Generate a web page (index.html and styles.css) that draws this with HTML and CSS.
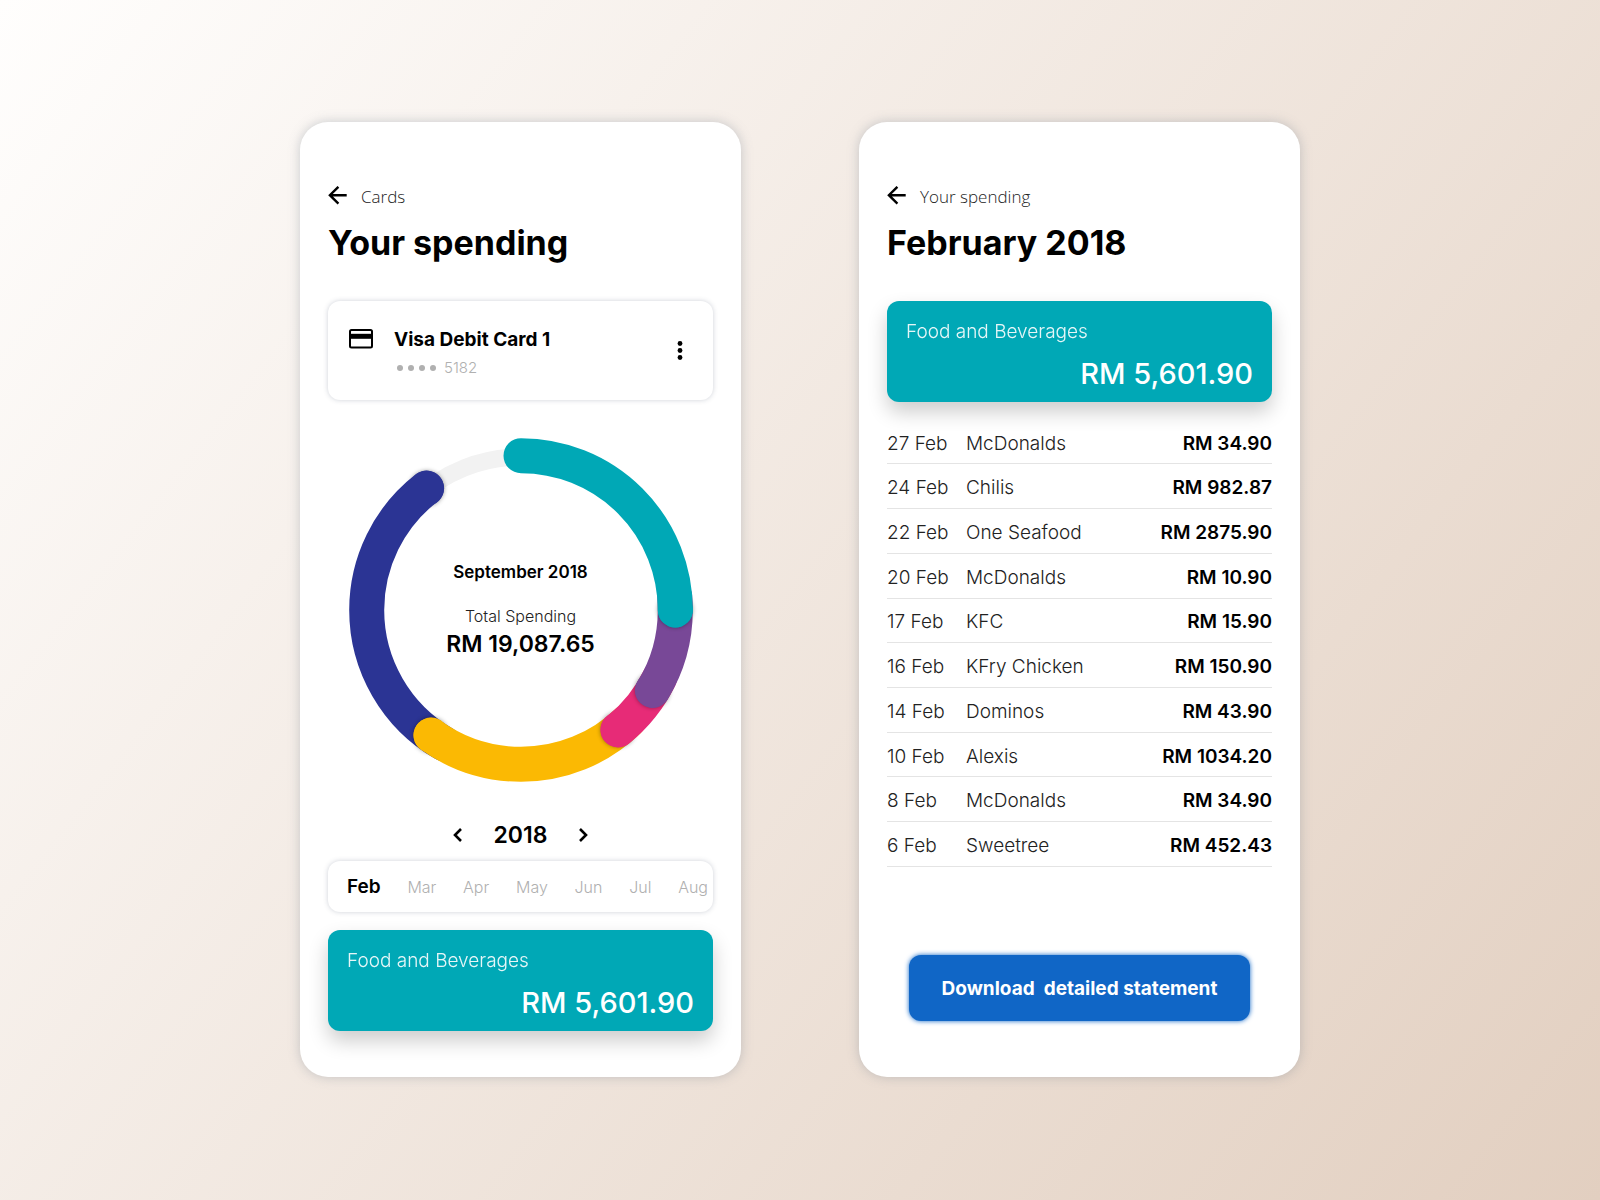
FILE: index.html
```html
<!DOCTYPE html>
<html lang="en">
<head>
    <meta charset="UTF-8">
    <meta name="viewport" content="width=device-width, initial-scale=1.0">
    <title>Your spending</title>
    <link rel="stylesheet" href="styles.css">
</head>
<body>

    <main class="screens">

        <section class="screen">
            <a class="back" href="#cards">
                <svg class="back-icon" viewBox="0 0 20 20" aria-hidden="true"><path d="M18.7 9.2H2M10.4 .8L1.9 9.2l8.5 8.4"/></svg>
                Cards
            </a>
            <h1>Your spending</h1>

            <div class="bank-card">
                <svg class="card-icon" viewBox="0 0 24 20" aria-hidden="true">
                    <rect x="1" y="1" width="22" height="17.5" rx="1.5"/>
                    <path d="M1 7.3h22"/>
                </svg>
                <div class="card-info">
                    <h2>Visa Debit Card 1</h2>
                    <p class="card-number">
                        <svg class="mask" viewBox="0 0 39 6" aria-hidden="true">
                            <circle cx="3" cy="3" r="3"/>
                            <circle cx="14" cy="3" r="3"/>
                            <circle cx="25" cy="3" r="3"/>
                            <circle cx="36" cy="3" r="3"/>
                        </svg>
                        5182
                    </p>
                </div>
                <button class="icon-button" aria-label="Card options">
                    <svg class="dots" viewBox="0 0 6 20" aria-hidden="true">
                        <circle cx="3" cy="2.5" r="2.4"/>
                        <circle cx="3" cy="9.5" r="2.4"/>
                        <circle cx="3" cy="16.5" r="2.4"/>
                    </svg>
                </button>
            </div>

            <div class="chart">
                <svg class="donut" viewBox="0 0 344 344" aria-hidden="true">
                    <circle class="track" cx="172" cy="172" r="153"/>
                    <g class="blue">
                        <circle class="cap" cx="77.6" cy="50.3" r="17.5"/>
                        <circle class="arc" cx="172" cy="172" r="154.3" pathLength="360" stroke-dasharray="112.2 247.8" stroke-dashoffset="-210"/>
                    </g>
                    <g class="yellow">
                        <circle class="cap" cx="82.1" cy="297.1" r="17.5"/>
                        <circle class="arc" cx="172" cy="172" r="154.3" pathLength="360" stroke-dasharray="79.7 280.3" stroke-dashoffset="-136"/>
                    </g>
                    <g class="pink">
                        <circle class="cap" cx="268.9" cy="291.7" r="17.5"/>
                        <circle class="arc" cx="172" cy="172" r="154.3" pathLength="360" stroke-dasharray="25 335" stroke-dashoffset="-116"/>
                    </g>
                    <g class="purple">
                        <circle class="cap" cx="303.4" cy="252.2" r="17.5"/>
                        <circle class="arc" cx="172" cy="172" r="154.3" pathLength="360" stroke-dasharray="36.4 323.6" stroke-dashoffset="-85"/>
                    </g>
                    <g class="teal">
                        <circle class="cap" cx="326.3" cy="172" r="17.5"/>
                        <circle class="arc" cx="172" cy="172" r="154.3" pathLength="360" stroke-dasharray="90 270"/>
                    </g>
                </svg>
                <div class="chart-label">
                    <h3>September 2018</h3>
                    <p>Total Spending</p>
                    <strong>RM 19,087.65</strong>
                </div>
            </div>

            <div class="year">
                <button class="icon-button" aria-label="Previous year">
                    <svg class="chevron" viewBox="0 0 10 16" aria-hidden="true"><path d="M8 2L2 8l6 6"/></svg>
                </button>
                <span>2018</span>
                <button class="icon-button" aria-label="Next year">
                    <svg class="chevron" viewBox="0 0 10 16" aria-hidden="true"><path d="M2 2l6 6-6 6"/></svg>
                </button>
            </div>

            <nav class="months" aria-label="Month">
                <button class="active">Feb</button>
                <button>Mar</button>
                <button>Apr</button>
                <button>May</button>
                <button>Jun</button>
                <button>Jul</button>
                <button>Aug</button>
            </nav>

            <div class="category">
                <p>Food and Beverages</p>
                <strong>RM 5,601.90</strong>
            </div>
        </section>

        <section class="screen">
            <a class="back" href="#spending">
                <svg class="back-icon" viewBox="0 0 20 20" aria-hidden="true"><path d="M18.7 9.2H2M10.4 .8L1.9 9.2l8.5 8.4"/></svg>
                Your spending
            </a>
            <h1>February 2018</h1>

            <div class="category">
                <p>Food and Beverages</p>
                <strong>RM 5,601.90</strong>
            </div>

            <table class="transactions">
                <tr><td class="date">27 Feb</td><td>McDonalds</td><td class="amount">RM 34.90</td></tr>
                <tr><td class="date">24 Feb</td><td>Chilis</td><td class="amount">RM 982.87</td></tr>
                <tr><td class="date">22 Feb</td><td>One Seafood</td><td class="amount">RM 2875.90</td></tr>
                <tr><td class="date">20 Feb</td><td>McDonalds</td><td class="amount">RM 10.90</td></tr>
                <tr><td class="date">17 Feb</td><td>KFC</td><td class="amount">RM 15.90</td></tr>
                <tr><td class="date">16 Feb</td><td>KFry Chicken</td><td class="amount">RM 150.90</td></tr>
                <tr><td class="date">14 Feb</td><td>Dominos</td><td class="amount">RM 43.90</td></tr>
                <tr><td class="date">10 Feb</td><td>Alexis</td><td class="amount">RM 1034.20</td></tr>
                <tr><td class="date">8 Feb</td><td>McDonalds</td><td class="amount">RM 34.90</td></tr>
                <tr><td class="date">6 Feb</td><td>Sweetree</td><td class="amount">RM 452.43</td></tr>
            </table>

            <button class="download">Download&nbsp; detailed statement</button>
        </section>

    </main>

</body>
</html>
```
FILE: styles.css
```css
* {
    box-sizing: border-box;
}

body {
    margin: 0;
    min-height: 100vh;
    background: linear-gradient(128deg, #fffefd, #e2cfc0);
    font-family: Inter, "Liberation Sans", sans-serif;
    color: #000;
}

h1, h2, h3, p {
    margin: 0;
}

button {
    padding: 0;
    border: none;
    background: none;
    font: inherit;
    color: inherit;
    cursor: pointer;
}

svg {
    display: block;
    flex: none;
}

.screens {
    display: grid;
    grid-template-columns: repeat(auto-fit, minmax(400px, 1fr));
    gap: 118px;
    max-width: 1000px;
    margin: 0 auto;
    padding: 122px 0;
}

.screen {
    display: flex;
    flex-direction: column;
    padding: 60px 28px 46px;
    border-radius: 28px;
    background: #fff;
    box-shadow: 0 0 12px rgba(110, 120, 135, 0.35);
}

.back {
    display: flex;
    align-items: center;
    gap: 13px;
    height: 28px;
    font-family: "Open Sans", sans-serif;
    font-size: 17px;
    font-weight: 300;
    color: #222;
    text-decoration: none;
}

.back-icon {
    width: 20px;
    height: 20px;
    fill: none;
    stroke: #000;
    stroke-width: 2.4;
}

h1 {
    margin: 12px 0 37px;
    font-size: 34px;
    line-height: 42px;
    font-weight: 700;
}

.bank-card {
    display: flex;
    align-items: center;
    height: 99px;
    padding: 0 30px 0 21px;
    border-radius: 12px;
    box-shadow: 0 0 5px rgba(60, 70, 100, 0.25);
}

.card-icon {
    width: 24px;
    height: 20px;
    align-self: flex-start;
    margin-top: 28px;
    fill: none;
    stroke: #000;
    stroke-width: 2;
}

.card-icon path {
    stroke-width: 5;
}

.card-info {
    flex: 1;
    margin-left: 21px;
    padding-top: 6px;
}

h2 {
    font-size: 19px;
    line-height: 28px;
    font-weight: 700;
}

.card-number {
    display: flex;
    align-items: center;
    gap: 8px;
    padding-left: 3px;
    font-size: 15px;
    line-height: 28px;
    font-weight: 300;
    color: #b0b0b0;
}

.mask {
    width: 39px;
    height: 6px;
    fill: #b0b0b0;
}

.dots {
    width: 6px;
    height: 20px;
}

.chart {
    display: grid;
    place-items: center;
    margin: 38px 0 36px;
}

.donut, .chart-label {
    grid-area: 1 / 1;
}

.donut {
    width: 344px;
    height: 344px;
    overflow: visible;
}

.track, .arc {
    fill: none;
}

.track {
    stroke: #f2f2f2;
    stroke-width: 17;
}

.arc {
    stroke: currentColor;
    stroke-width: 35;
    stroke-linecap: round;
    transform: rotate(-90deg);
    transform-origin: center;
}

.cap {
    fill: currentColor;
    filter: drop-shadow(0 0 2px rgba(0, 0, 0, 0.4));
}

.blue { color: #2b3494; }
.yellow { color: #fbb903; }
.pink { color: #e72b77; }
.purple { color: #784897; }
.teal { color: #00a8b6; }

.chart-label {
    text-align: center;
}

h3 {
    margin-bottom: 20px;
    font-size: 17px;
    line-height: 24px;
    font-weight: 600;
}

.chart-label p {
    font-size: 16px;
    line-height: 24px;
    font-weight: 300;
    color: #222;
}

.chart-label strong {
    font-size: 23px;
    line-height: 32px;
    font-weight: 600;
}

.year {
    display: flex;
    align-items: center;
    justify-content: center;
    gap: 31px;
    height: 34px;
    font-size: 23px;
    font-weight: 600;
}

.chevron {
    width: 10px;
    height: 16px;
    fill: none;
    stroke: #000;
    stroke-width: 2.6;
}

.months {
    display: flex;
    align-items: baseline;
    justify-content: space-between;
    height: 51px;
    margin: 9px 0 18px;
    padding: 14px 5px 0 19px;
    border-radius: 12px;
    box-shadow: 0 0 5px rgba(60, 70, 100, 0.25);
    font-size: 16px;
    font-weight: 300;
    color: #b0b0b0;
}

.months .active {
    font-size: 19px;
    font-weight: 600;
    color: #000;
}

.category {
    display: flex;
    flex-direction: column;
    height: 101px;
    padding: 17px 19px;
    border-radius: 12px;
    background: #00a8b6;
    box-shadow: 0 10px 20px rgba(0, 0, 0, 0.2);
    color: #fff;
}

.category p {
    font-size: 19px;
    line-height: 28px;
    font-weight: 300;
    opacity: 0.9;
}

.category strong {
    margin-top: 7px;
    font-size: 29px;
    line-height: 42px;
    font-weight: 500;
    text-align: right;
}

.transactions {
    width: 100%;
    height: 447px;
    margin-top: 18px;
    border-collapse: collapse;
    font-size: 19px;
    font-weight: 300;
    color: #222;
}

.transactions td {
    padding: 3px 0 0;
    border-bottom: 1px solid #e4e4e4;
}

.transactions .date {
    width: 79px;
}

.transactions .amount {
    font-weight: 600;
    color: #000;
    text-align: right;
}

.download {
    height: 66px;
    margin: 88px 22px 0;
    border-radius: 12px;
    background: #1066c6;
    box-shadow: 0 0 5px #1066c6;
    font-size: 19px;
    font-weight: 700;
    color: #fff;
}
```
